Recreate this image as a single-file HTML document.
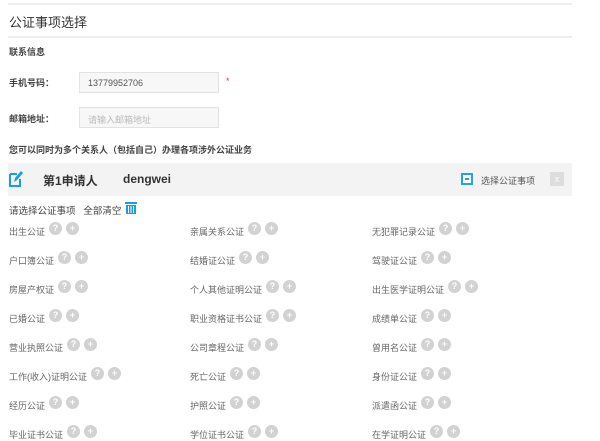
<!DOCTYPE html>
<html><head><meta charset="utf-8"><style>
*{margin:0;padding:0;box-sizing:border-box}
body{width:600px;height:440px;background:#fff;font-family:"Liberation Sans","Noto Sans CJK SC",sans-serif;position:relative;overflow:hidden;color:#333}
.a{position:absolute;white-space:nowrap}
.line{position:absolute;left:8px;width:564px;height:2px;background:#eee}
.in{position:absolute;left:79px;width:140px;height:21px;border:1px solid #e2e2e2;background:#f7f7f7;font-size:9px;padding:5px 0 0 8px}
.it{position:absolute;font-size:9px;color:#666;white-space:nowrap;display:flex;align-items:flex-end}
.c{display:inline-block;width:13px;height:13px;border-radius:50%;background:#d2d2d2;color:#fff;font-size:9px;font-weight:bold;text-align:center;line-height:13px;margin-left:4px;position:relative;top:-3px}
</style></head><body>
<div class="line" style="top:3px"></div>
<div class="a" style="left:9px;top:12px;font-size:13px;color:#333">公证事项选择</div>
<div class="line" style="top:36px"></div>
<div class="a" style="left:9px;top:45px;font-size:9px;font-weight:bold;color:#444">联系信息</div>
<div class="a" style="left:9px;top:76px;font-size:9px;font-weight:bold;color:#444">手机号码：</div>
<div class="in" style="top:72px;color:#555">13779952706</div>
<div class="a" style="left:226px;top:76px;font-size:9px;color:#e33">*</div>
<div class="a" style="left:9px;top:112px;font-size:9px;font-weight:bold;color:#444">邮箱地址：</div>
<div class="in" style="top:107px;color:#bbb">请输入邮箱地址</div>
<div class="a" style="left:9px;top:143px;font-size:9px;font-weight:bold;color:#444">您可以同时为多个关系人（包括自己）办理各项涉外公证业务</div>
<div class="a" style="left:8px;top:163px;width:564px;height:33px;background:#f3f3f3"></div>
<svg class="a" style="left:9px;top:170px" width="14" height="18" viewBox="0 0 14 18"><path d="M1 4h7M1 4v12h10V9" stroke="#1a9ee0" stroke-width="2" fill="none"/><path d="M5 12l1-4 6-7 2 2-6 7z" fill="#1a9ee0"/></svg>
<div class="a" style="left:43px;top:172px;font-size:12px;font-weight:bold;color:#333">第1申请人</div>
<div class="a" style="left:123px;top:172px;font-size:12px;font-weight:bold;color:#333">dengwei</div>
<div class="a" style="left:461px;top:173px;width:12px;height:12px;border:2px solid #29a3e0;background:#fff"><div style="position:absolute;left:2px;top:3px;width:4px;height:2px;background:#29a3e0"></div></div>
<div class="a" style="left:481px;top:174px;font-size:9px;color:#555">选择公证事项</div>
<div class="a" style="left:550px;top:172px;width:14px;height:14px;background:#ddd;color:#fff;font-size:9px;text-align:center;line-height:14px">x</div>
<div class="a" style="left:9px;top:203px;font-size:9.5px;color:#444">请选择公证事项&nbsp;&nbsp;&nbsp;全部清空</div>
<svg class="a" style="left:125px;top:202px" width="12" height="12" viewBox="0 0 12 12"><rect x="0" y="0" width="12" height="2" fill="#1a9ee0"/><rect x="1" y="3" width="10" height="9" fill="#1a9ee0"/><rect x="3" y="4" width="1" height="7" fill="#fff"/><rect x="5.5" y="4" width="1" height="7" fill="#fff"/><rect x="8" y="4" width="1" height="7" fill="#fff"/></svg>

<div class="it" style="left:9px;top:225px">出生公证<span class="c">?</span><span class="c">+</span></div>
<div class="it" style="left:190px;top:225px">亲属关系公证<span class="c">?</span><span class="c">+</span></div>
<div class="it" style="left:372px;top:225px">无犯罪记录公证<span class="c">?</span><span class="c">+</span></div>

<div class="it" style="left:9px;top:254px">户口簿公证<span class="c">?</span><span class="c">+</span></div>
<div class="it" style="left:190px;top:254px">结婚证公证<span class="c">?</span><span class="c">+</span></div>
<div class="it" style="left:372px;top:254px">驾驶证公证<span class="c">?</span><span class="c">+</span></div>

<div class="it" style="left:9px;top:283px">房屋产权证<span class="c">?</span><span class="c">+</span></div>
<div class="it" style="left:190px;top:283px">个人其他证明公证<span class="c">?</span><span class="c">+</span></div>
<div class="it" style="left:372px;top:283px">出生医学证明公证<span class="c">?</span><span class="c">+</span></div>

<div class="it" style="left:9px;top:312px">已婚公证<span class="c">?</span><span class="c">+</span></div>
<div class="it" style="left:190px;top:312px">职业资格证书公证<span class="c">?</span><span class="c">+</span></div>
<div class="it" style="left:372px;top:312px">成绩单公证<span class="c">?</span><span class="c">+</span></div>

<div class="it" style="left:9px;top:341px">营业执照公证<span class="c">?</span><span class="c">+</span></div>
<div class="it" style="left:190px;top:341px">公司章程公证<span class="c">?</span><span class="c">+</span></div>
<div class="it" style="left:372px;top:341px">曾用名公证<span class="c">?</span><span class="c">+</span></div>

<div class="it" style="left:9px;top:370px">工作(收入)证明公证<span class="c">?</span><span class="c">+</span></div>
<div class="it" style="left:190px;top:370px">死亡公证<span class="c">?</span><span class="c">+</span></div>
<div class="it" style="left:372px;top:370px">身份证公证<span class="c">?</span><span class="c">+</span></div>

<div class="it" style="left:9px;top:399px">经历公证<span class="c">?</span><span class="c">+</span></div>
<div class="it" style="left:190px;top:399px">护照公证<span class="c">?</span><span class="c">+</span></div>
<div class="it" style="left:372px;top:399px">派遣函公证<span class="c">?</span><span class="c">+</span></div>

<div class="it" style="left:9px;top:428px">毕业证书公证<span class="c">?</span><span class="c">+</span></div>
<div class="it" style="left:190px;top:428px">学位证书公证<span class="c">?</span><span class="c">+</span></div>
<div class="it" style="left:372px;top:428px">在学证明公证<span class="c">?</span><span class="c">+</span></div>
</body></html>
